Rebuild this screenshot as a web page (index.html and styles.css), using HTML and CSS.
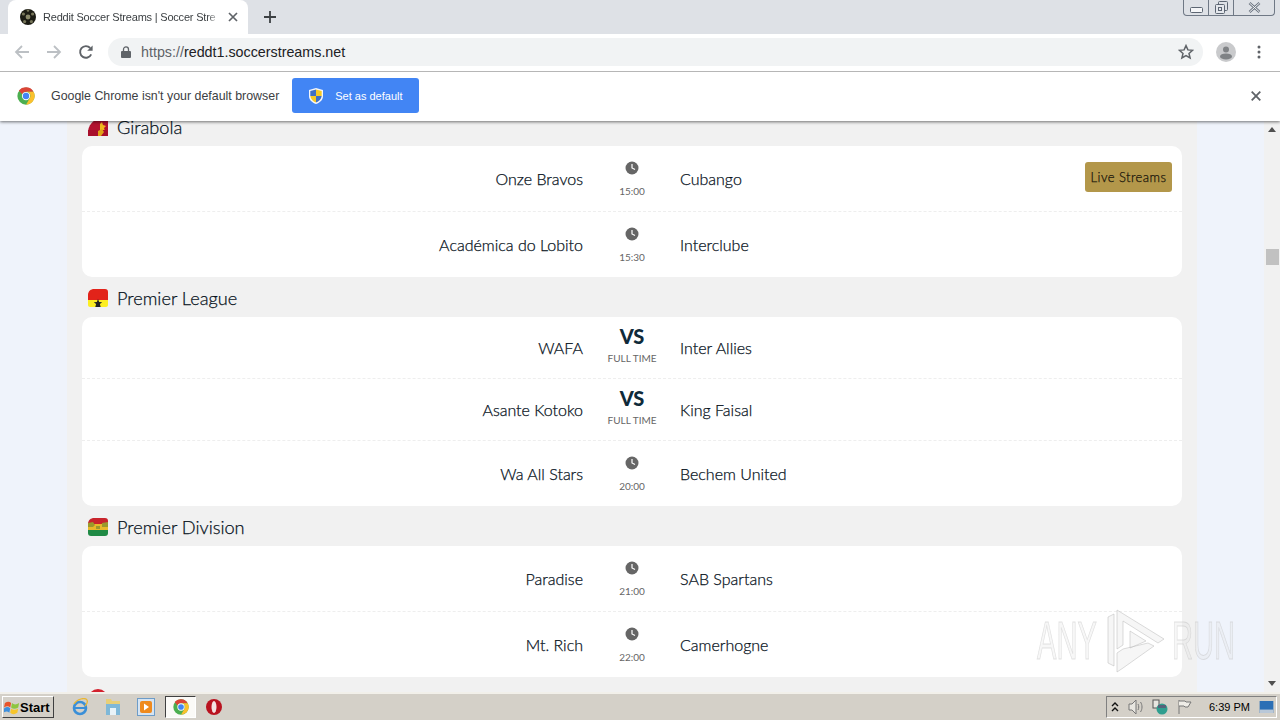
FILE: index.html
```html
<!DOCTYPE html>
<html lang="en">
<head>
<meta charset="utf-8">
<title>Reddit Soccer Streams</title>
<link rel="stylesheet" href="styles.css">
</head>
<body>
<header class="browser">
  <div class="tabstrip">
    <div class="tab">
      <svg class="favicon" viewBox="0 0 16 16"><circle cx="8" cy="8" r="8" fill="#1c1c14"/><circle cx="8" cy="8" r="2.4" fill="#8b8a6a"/><circle cx="3.4" cy="5" r="1.6" fill="#77765a"/><circle cx="12.6" cy="5" r="1.6" fill="#77765a"/><circle cx="4.6" cy="12.6" r="1.6" fill="#77765a"/><circle cx="11.4" cy="12.6" r="1.6" fill="#77765a"/><circle cx="8" cy="1.6" r="1.2" fill="#77765a"/></svg>
      <span class="tab-title">Reddit Soccer Streams | Soccer Stre</span>
      <svg class="tab-close" viewBox="0 0 10 10"><path d="M1 1l8 8M9 1l-8 8" stroke="#5f6368" stroke-width="1.7"/></svg>
    </div>
    <svg class="newtab" viewBox="0 0 12 12"><path d="M6 0v12M0 6h12" stroke="#3c4043" stroke-width="1.8"/></svg>
    <div class="winctl">
      <div class="wbtn wmin"><svg width="13" height="6" viewBox="0 0 13 6"><rect x=".5" y=".5" width="12" height="5" rx="1" fill="#f4f5f7" stroke="#5d6673"/></svg></div>
      <div class="wbtn wres"><svg width="13" height="13" viewBox="0 0 13 13"><rect x="3.5" y=".5" width="9" height="9" rx="1" fill="none" stroke="#5d6673"/><rect x=".5" y="3.5" width="9" height="9" rx="1" fill="#e4e7ec" stroke="#5d6673"/><rect x="3.5" y="6.5" width="3" height="3" fill="none" stroke="#5d6673"/></svg></div>
      <div class="wbtn wclose"><svg width="13" height="11" viewBox="0 0 13 11"><path d="M1.5 1l10 9M11.5 1l-10 9" stroke="#6b7480" stroke-width="2.6"/><path d="M1.5 1l10 9M11.5 1l-10 9" stroke="#f4f5f7" stroke-width="1"/></svg></div>
    </div>
  </div>
  <div class="toolbar">
    <svg class="navicon" viewBox="0 0 16 16"><path d="M15 8H2M8 2L2 8l6 6" fill="none" stroke="#bcc0c4" stroke-width="1.8"/></svg>
    <svg class="navicon" viewBox="0 0 16 16"><path d="M1 8h13M8 2l6 6-6 6" fill="none" stroke="#bcc0c4" stroke-width="1.8"/></svg>
    <svg class="navicon" viewBox="0 0 16 16"><path d="M13.2 10.4A5.8 5.8 0 1 1 12.2 4" fill="none" stroke="#5f6368" stroke-width="1.9"/><path d="M14.6 1.4v5.4H9.2z" fill="#5f6368"/></svg>
    <div class="omnibox">
      <svg class="lock" viewBox="0 0 10 12"><path d="M2.5 5V3.4a2.5 2.5 0 0 1 5 0V5" fill="none" stroke="#5f6368" stroke-width="1.3"/><rect y="5" width="10" height="7" rx="1" fill="#5f6368"/></svg>
      <span class="url"><span class="scheme">https://</span>reddt1.soccerstreams.net</span>
      <svg class="star" viewBox="0 0 16 16"><path d="M8 1.6l1.9 4.3 4.7.4-3.6 3.1 1.1 4.6L8 11.6 3.9 14l1.1-4.6-3.6-3.1 4.7-.4z" fill="none" stroke="#5f6368" stroke-width="1.5"/></svg>
    </div>
    <svg class="avatar" viewBox="0 0 20 20"><circle cx="10" cy="10" r="10" fill="#c9cacc"/><circle cx="10" cy="7.4" r="3" fill="#7f8285"/><ellipse cx="10" cy="14.4" rx="6" ry="3" fill="#7f8285"/></svg>
    <svg class="dots" viewBox="0 0 4 14"><circle cx="2" cy="2" r="1.5" fill="#5f6368"/><circle cx="2" cy="7" r="1.5" fill="#5f6368"/><circle cx="2" cy="12" r="1.5" fill="#5f6368"/></svg>
  </div>
  <div class="infobar">
    <svg class="chrome-logo" viewBox="0 0 48 48"><circle cx="24" cy="24" r="23" fill="#4caf50"/><path d="M24 1a23 23 0 0 1 20 11.500H24a11.500 11.500 0 0 0-10.500 7L5 9A23 23 0 0 1 24 1z" fill="#db4437"/><path d="M44 12.500A23 23 0 0 1 24 47l10-17a11.500 11.500 0 0 0-10-17.500z" fill="#fbc02d"/><circle cx="24" cy="24" r="11" fill="#fff"/><circle cx="24" cy="24" r="8.500" fill="#4285f4"/></svg>
    <span class="info-text">Google Chrome isn't your default browser</span>
    <button class="default-btn">
      <svg class="shield" viewBox="0 0 14 16"><path d="M7 0l7 2v6c0 4-3 6.500-7 8-4-1.500-7-4-7-8V2z" fill="#f4f6fb"/><path d="M7 1.500V8H1.300V3z" fill="#3f6fc4"/><path d="M7 1.500V8h5.700V3z" fill="#f6c924"/><path d="M7 8v6.500C4 13.200 1.800 11.200 1.300 8z" fill="#f6c924"/><path d="M7 8v6.500c3-1.300 5.200-3.300 5.700-6.500z" fill="#3f6fc4"/></svg>
      <span>Set as default</span>
    </button>
    <svg class="info-close" viewBox="0 0 10 10"><path d="M.7.700l8.600 8.600M9.300.7L.7 9.300" stroke="#5f6368" stroke-width="1.800"/></svg>
  </div>
</header>

<div class="viewport">
  <main class="page">
    <div class="column">
      <section class="league">
        <h2 class="league-title">
          <svg class="flag" viewBox="0 0 20 18"><path d="M0 18V13C1 5 8 0 14 0h3c2 0 3 1 3 3v15z" fill="#b3122f"/><path d="M12 6l2-2 1 3 3 1-2 2 1 3-3-1-2 2z" fill="#f1b71c"/><path d="M0 12h20v6H0z" fill="#a80f2b"/><path d="M10 13l4-2 2 3-3 4h-3z" fill="#e0a318"/></svg>
          <span>Girabola</span>
        </h2>
        <div class="card">
          <div class="match">
            <div class="home">Onze Bravos</div>
            <div class="status"><svg class="clock" viewBox="0 0 14 14"><circle cx="7" cy="7" r="6.500" fill="#666"/><path d="M7 3v4l3 1.500" fill="none" stroke="#fff" stroke-width="1.200"/></svg><span class="time">15:00</span></div>
            <div class="away"><span>Cubango</span><a class="streams">Live Streams</a></div>
          </div>
          <div class="match">
            <div class="home">Académica do Lobito</div>
            <div class="status"><svg class="clock" viewBox="0 0 14 14"><circle cx="7" cy="7" r="6.500" fill="#666"/><path d="M7 3v4l3 1.500" fill="none" stroke="#fff" stroke-width="1.200"/></svg><span class="time">15:30</span></div>
            <div class="away"><span>Interclube</span></div>
          </div>
        </div>
      </section>

      <section class="league">
        <h2 class="league-title">
          <svg class="flag" viewBox="0 0 20 18"><path d="M0 6C0 2 3 0 6 0h11c2 0 3 1 3 3v4H0z" fill="#e2231a"/><path d="M0 7h20v5H0z" fill="#e2231a"/><path d="M0 11h20v5c0 1-1 2-2 2H2c-1 0-2-1-2-2z" fill="#fcee21"/><path d="M10 10l1.200 3 3 .2-2.300 1.800.8 3h-5.400l.8-3-2.300-1.800 3-.2z" fill="#222"/></svg>
          <span>Premier League</span>
        </h2>
        <div class="card">
          <div class="match compact">
            <div class="home">WAFA</div>
            <div class="status"><span class="vs">VS</span><span class="ft">FULL TIME</span></div>
            <div class="away"><span>Inter Allies</span></div>
          </div>
          <div class="match compact">
            <div class="home">Asante Kotoko</div>
            <div class="status"><span class="vs">VS</span><span class="ft">FULL TIME</span></div>
            <div class="away"><span>King Faisal</span></div>
          </div>
          <div class="match">
            <div class="home">Wa All Stars</div>
            <div class="status"><svg class="clock" viewBox="0 0 14 14"><circle cx="7" cy="7" r="6.500" fill="#666"/><path d="M7 3v4l3 1.500" fill="none" stroke="#fff" stroke-width="1.200"/></svg><span class="time">20:00</span></div>
            <div class="away"><span>Bechem United</span></div>
          </div>
        </div>
      </section>

      <section class="league">
        <h2 class="league-title">
          <svg class="flag" viewBox="0 0 20 18"><path d="M0 6C0 2 3 0 6 0h11c2 0 3 1 3 3v3H0z" fill="#c8242c"/><path d="M0 6h20v6H0z" fill="#e8b92a"/><path d="M0 12h20v3c0 2-1 3-3 3H3c-2 0-3-1-3-3z" fill="#1f8a45"/><path d="M0 5l5-1 2 3-2 2H0zM8 8h4v3H8zM14 5l6-1v5h-6z" fill="#9a9a2c"/></svg>
          <span>Premier Division</span>
        </h2>
        <div class="card">
          <div class="match">
            <div class="home">Paradise</div>
            <div class="status"><svg class="clock" viewBox="0 0 14 14"><circle cx="7" cy="7" r="6.500" fill="#666"/><path d="M7 3v4l3 1.500" fill="none" stroke="#fff" stroke-width="1.200"/></svg><span class="time">21:00</span></div>
            <div class="away"><span>SAB Spartans</span></div>
          </div>
          <div class="match">
            <div class="home">Mt. Rich</div>
            <div class="status"><svg class="clock" viewBox="0 0 14 14"><circle cx="7" cy="7" r="6.500" fill="#666"/><path d="M7 3v4l3 1.500" fill="none" stroke="#fff" stroke-width="1.200"/></svg><span class="time">22:00</span></div>
            <div class="away"><span>Camerhogne</span></div>
          </div>
        </div>
      </section>

      <section class="league">
        <h2 class="league-title">
          <svg class="flag" viewBox="0 0 20 18"><path d="M0 10a10 10 0 0 1 20 0v8H0z" fill="#d3222e"/></svg>
        </h2>
      </section>
    </div>
  </main>
  <aside class="scrollbar">
    <div class="sb-btn"><i class="arrow-up"></i></div>
    <div class="sb-track"><div class="sb-thumb"></div></div>
    <div class="sb-btn"><i class="arrow-down"></i></div>
  </aside>
  <div class="watermark">
    <span class="wm-text">ANY</span>
    <svg class="wm-logo" viewBox="0 0 60 64"><g fill="rgba(226,226,226,.3)" stroke="rgba(190,190,190,.55)"><path d="M2 8l6-3v52l-6-3z"/><path d="M11 1l47 29-6 4L17 12v24l-6 4z"/><path d="M11 44l6-4 25-6 6 3-31 22-6 4z"/><path d="M24 22l16 10-16 7z"/></g></svg>
    <span class="wm-text">RUN</span>
  </div>
</div>

<footer class="taskbar">
  <button class="start">
    <svg class="winflag" viewBox="0 0 18 16"><path d="M1 3c3-2 5-2 7 0l-1 5C5 6 3 6 0 8z" fill="#e8542a"/><path d="M9 3c2 2 5 2 8 0l-1 5c-3 2-6 2-8 0z" fill="#8dc63f"/><path d="M0 9c3-2 5-2 7 0l-1 5c-2-2-4-2-7 0z" fill="#3d8fdd"/><path d="M8 9c2 2 5 2 8 0l-1 5c-3 2-6 2-8 0z" fill="#f7c52b"/></svg>
    <span>Start</span>
  </button>
  <div class="quick">
    <svg class="tb-icon" viewBox="0 0 18 18"><circle cx="9" cy="10" r="6" fill="none" stroke="#3a8fd8" stroke-width="2.600"/><path d="M4 10h11" stroke="#3a8fd8" stroke-width="2"/><path d="M3 6C6 1 14-1 16 2c1 2-1 5-2 6" fill="none" stroke="#e9b632" stroke-width="1.300"/></svg>
    <svg class="tb-icon" viewBox="0 0 18 18"><path d="M2 1h5l1 2h8v13H2z" fill="#e8cf78"/><path d="M2 6h14v11H2z" fill="#7fb8d8"/><path d="M6 10h6v7H6z" fill="#e8f3f8"/></svg>
    <svg class="tb-icon" viewBox="0 0 18 18"><rect x=".5" y=".5" width="17" height="17" fill="#d6e4f2" stroke="#6d9cc8"/><rect x="3" y="3" width="12" height="12" rx="2" fill="#ef8a1d"/><path d="M7 5.500l5 3.500-5 3.500z" fill="#fff"/></svg>
    <div class="tb-active"><svg class="tb-icon" viewBox="0 0 48 48"><circle cx="24" cy="24" r="23" fill="#4caf50"/><path d="M24 1a23 23 0 0 1 20 11.500H24a11.500 11.500 0 0 0-10.500 7L5 9A23 23 0 0 1 24 1z" fill="#db4437"/><path d="M44 12.500A23 23 0 0 1 24 47l10-17a11.500 11.500 0 0 0-10-17.500z" fill="#fbc02d"/><circle cx="24" cy="24" r="11" fill="#fff"/><circle cx="24" cy="24" r="8.500" fill="#4285f4"/></svg></div>
    <svg class="tb-icon" viewBox="0 0 18 18"><ellipse cx="9" cy="9" rx="8" ry="8" fill="#b9121f"/><ellipse cx="9" cy="9" rx="2.500" ry="6" fill="#f4e2e2"/></svg>
  </div>
  <div class="tray">
    <svg class="tray-chev" viewBox="0 0 8 10"><path d="M1 4l3-3 3 3M1 9l3-3 3 3" fill="none" stroke="#111" stroke-width="1.400"/></svg>
    <svg class="tray-icon" viewBox="0 0 16 16"><path d="M1 5h3l4-4v14l-4-4H1z" fill="#e8e6e0" stroke="#777"/><path d="M10 5c1 2 1 4 0 6M12.500 3c2 3 2 7 0 10" fill="none" stroke="#777"/></svg>
    <svg class="tray-icon" viewBox="0 0 16 16"><rect x="1" y="1" width="6" height="8" fill="#e8e6e0" stroke="#555"/><circle cx="10" cy="10" r="5.500" fill="#2f9e8f"/><rect x="6" y="6" width="8" height="3" fill="#56617a"/></svg>
    <svg class="tray-icon" viewBox="0 0 16 16"><path d="M3 1v14" stroke="#777"/><path d="M3 2h6l1 1h5l-3 5H9L8 7H3" fill="#efede7" stroke="#777"/></svg>
    <span class="clock-text">6:39 PM</span>
    <svg class="desk" viewBox="0 0 16 14"><rect width="16" height="14" fill="#2c6fb5"/><rect y="10" width="16" height="4" fill="#b9c8d8"/></svg>
  </div>
</footer>
</body>
</html>
```
FILE: styles.css
```css
* { box-sizing: border-box; }
html, body { margin: 0; height: 100%; }
body {
  width: 1280px; height: 720px; overflow: hidden;
  display: flex; flex-direction: column;
  font-family: "Lato", "Liberation Sans", sans-serif;
  background: #eff3fb;
}
.browser { flex: none; position: relative; z-index: 2; box-shadow: 0 1px 3px rgba(0,0,0,.55); }
.tabstrip { height: 34px; background: #dee1e6; display: flex; align-items: flex-end; position: relative; padding-left: 8px; }
.tab {
  width: 240px; height: 34px; background: #fff; border-radius: 8px 8px 0 0;
  display: flex; align-items: center; padding: 0 10px 1px 12px; gap: 7px;
}
.favicon { width: 16px; height: 16px; flex: none; }
.tab-title { flex: 1; min-width: 0; white-space: nowrap; font: 11px/16px "Liberation Sans", sans-serif; letter-spacing: -.2px; color: #3c4043; -webkit-mask-image: linear-gradient(90deg,#000 92%,transparent); mask-image: linear-gradient(90deg,#000 92%,transparent); }
.tab-close { width: 10px; height: 10px; flex: none; }
.newtab { width: 12px; height: 12px; margin: 0 0 11px 16px; }
.winctl { position: absolute; top: 0; right: 5px; width: 92px; height: 16px; display: flex; border: 1px solid #6f7885; border-top: 0; border-radius: 0 0 4px 4px; }
.wbtn { display: flex; align-items: center; justify-content: center; }
.wmin { width: 25px; border-right: 1px solid #6f7885; padding-top: 5px; }
.wres { width: 25px; border-right: 1px solid #6f7885; }
.wclose { flex: 1; }
.toolbar { height: 37px; background: #fff; display: flex; align-items: center; padding: 0 14px 1px; position: relative; }
.navicon { width: 16px; height: 16px; margin-right: 16px; flex: none; }
.omnibox { width: 1095px; height: 28px; margin-left: -2px; background: #f1f3f4; border-radius: 14px; display: flex; align-items: center; padding: 0 9px 0 13px; flex: none; }
.lock { width: 10px; height: 12px; flex: none; }
.url { flex: 1; margin-left: 10px; font: 14.300px/18px "Liberation Sans", sans-serif; color: #202124; }
.scheme { color: #5f6368; }
.star { width: 16px; height: 16px; }
.avatar { width: 20px; height: 20px; margin-left: 13px; flex: none; }
.dots { width: 4px; height: 14px; margin-left: 21px; flex: none; }
.infobar { height: 50px; background: #fff; border-top: 1px solid #b6b6b6; display: flex; align-items: center; padding: 0 18px 2px 17px; }
.chrome-logo { width: 18px; height: 18px; flex: none; }
.info-text { margin-left: 16px; font: 12.400px/16px "Liberation Sans", sans-serif; color: #3c4043; white-space: nowrap; }
.default-btn { margin-left: 13px; width: 127px; height: 35px; background: #4285f4; border: 0; border-radius: 3px; color: #fff; display: flex; align-items: center; padding: 0 0 0 17px; font: 11px "Liberation Sans", sans-serif; gap: 12px; }
.shield { width: 14px; height: 16px; flex: none; }
.info-close { width: 10px; height: 10px; margin-left: auto; margin-right: 1px; }

.viewport { flex: 1; min-height: 0; display: flex; position: relative; overflow: hidden; }
.page { flex: 1; min-width: 0; overflow: hidden; }
.column { width: 1130px; margin: -15px auto 0; padding: 0 15px; background: #f1f1f1; min-height: 700px; }
.league-title { height: 40px; margin: 0; display: flex; align-items: center; padding: 1px 0 0 6px; gap: 9px; font-size: 18.200px; font-weight: 300; color: #07121c; line-height: 24px; -webkit-text-stroke: .25px #07121c; }
.flag { width: 20px; height: 18px; flex: none; }
.card { background: #fff; border-radius: 10px; overflow: hidden; }
.match { display: grid; grid-template-columns: 501px 98px 1fr; height: 66px; border-bottom: 1px dashed #eee; font-size: 16px; font-weight: 300; color: #07121c; -webkit-text-stroke: .25px #07121c; }
.match:last-child { height: 65px; border-bottom: 0; }
.match.compact { height: 62px; }
.home { text-align: right; align-self: center; }
.away { display: flex; align-items: center; justify-content: space-between; padding-right: 10px; margin-left: -1px; }
.status { display: flex; flex-direction: column; align-items: center; padding-top: 15px; -webkit-text-stroke: 0; }
.compact .status { padding-top: 8px; }
.clock { width: 14px; height: 14px; }
.time { margin-top: 9px; font-size: 10px; line-height: 14px; color: #666; font-weight: 400; }
.vs { font-size: 20px; line-height: 22px; font-weight: 900; color: #0f2a3a; }
.ft { font-size: 10px; line-height: 14px; margin-top: 4px; color: #666; font-weight: 400; }
.streams { width: 87px; height: 30px; margin-top: -4px; background: #b3974a; border-radius: 3px; color: #17140a; font-size: 13px; font-weight: 300; display: flex; align-items: center; justify-content: center; letter-spacing: .45px; -webkit-text-stroke: .25px #17140a; }

.scrollbar { flex: none; width: 16px; background: #f1f1f1; display: flex; flex-direction: column; }
.sb-btn { height: 17px; display: flex; align-items: center; justify-content: center; flex: none; }
.arrow-up { border: 4.500px solid transparent; border-top: 0; border-bottom: 5px solid #505050; }
.arrow-down { border: 4.500px solid transparent; border-bottom: 0; border-top: 5px solid #505050; }
.sb-track { flex: 1; padding-top: 111px; }
.sb-thumb { width: 13px; height: 16px; margin-left: 2px; background: #c1c1c1; }
.watermark { position: absolute; left: 1037px; top: 488px; width: 197px; height: 64px; display: flex; align-items: center; justify-content: space-between; pointer-events: none; }
.wm-text { display: block; width: 62px; font: 400 53px/54px "Liberation Sans", sans-serif; white-space: nowrap; transform: scaleX(.55); transform-origin: left center; color: rgba(225,225,225,.25); -webkit-text-stroke: 1px rgba(190,190,190,.45); }
.wm-logo { width: 60px; height: 64px; flex: none; }

.taskbar { flex: none; height: 28px; background: #d4d0c8; border-top: 2px solid #f2f0ea; display: flex; align-items: center; position: relative; z-index: 2; padding: 0 3px 0 2px; }
.start { width: 52px; height: 22px; background: #d4d0c8; border: 1px solid; border-color: #fff #404040 #404040 #fff; display: flex; align-items: center; padding: 0 0 0 1px; gap: 0; font: 700 13px "Liberation Sans", sans-serif; color: #000; }
.winflag { width: 16px; height: 15px; flex: none; }
.quick { display: flex; align-items: center; margin-left: 17px; gap: 15px; }
.tb-icon { width: 18px; height: 18px; flex: none; display: block; }
.tb-active { width: 31px; height: 22px; margin: 0 -6px 0 -5px; background: #fbfaf7; border: 1px solid; border-color: #404040 #fff #fff #404040; display: flex; align-items: center; justify-content: center; }
.tb-active .tb-icon { width: 16px; height: 16px; }
.tray { margin-left: auto; width: 171px; height: 22px; border: 1px solid; border-color: #808080 #fff #fff #808080; display: flex; align-items: center; padding: 0 2px 0 4px; gap: 8px; }
.tray-chev { width: 8px; height: 10px; flex: none; margin-right: 1px; }
.tray-icon { width: 16px; height: 16px; flex: none; }
.clock-text { margin-left: 9px; font: 11px "Liberation Sans", sans-serif; color: #000; white-space: nowrap; }
.desk { width: 15px; height: 12px; margin-left: auto; }
```
